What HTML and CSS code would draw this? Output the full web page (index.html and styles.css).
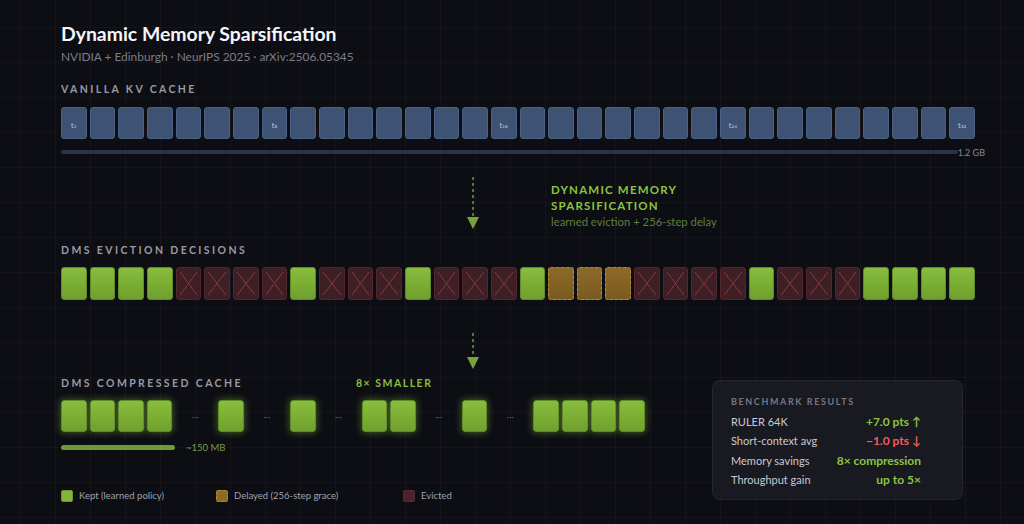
FILE: index.html
```html
<!DOCTYPE html>
<html>
<head>
<meta charset="utf-8">
<title>Dynamic Memory Sparsification</title>
<link rel="stylesheet" href="styles.css">
</head>
<body>
<div class="page">
  <h1 class="title">Dynamic Memory Sparsification</h1>
  <div class="subtitle">NVIDIA + Edinburgh · NeurIPS 2025 · arXiv:2506.05345</div>

  <div class="label l1">VANILLA KV CACHE</div>
  <div class="row r1">
    <div class="cell v"><span class="tl">t₁</span></div>
    <div class="cell v"></div><div class="cell v"></div><div class="cell v"></div>
    <div class="cell v"></div><div class="cell v"></div><div class="cell v"></div>
    <div class="cell v"><span class="tl">t₈</span></div>
    <div class="cell v"></div><div class="cell v"></div><div class="cell v"></div>
    <div class="cell v"></div><div class="cell v"></div><div class="cell v"></div>
    <div class="cell v"></div>
    <div class="cell v"><span class="tl">t₁₆</span></div>
    <div class="cell v"></div><div class="cell v"></div><div class="cell v"></div>
    <div class="cell v"></div><div class="cell v"></div><div class="cell v"></div>
    <div class="cell v"></div>
    <div class="cell v"><span class="tl">t₂₄</span></div>
    <div class="cell v"></div><div class="cell v"></div><div class="cell v"></div>
    <div class="cell v"></div><div class="cell v"></div><div class="cell v"></div>
    <div class="cell v"></div>
    <div class="cell v"><span class="tl">t₃₂</span></div>
  </div>
  <div class="barrow">
    <div class="bar bar-v"></div>
    <span class="size">1.2 GB</span>
  </div>

  <div class="flow">
    <svg class="arrow" width="14" height="53" viewBox="0 0 14 53">
      <line x1="7" y1="0" x2="7" y2="39" stroke="#6f9a36" stroke-width="1.5" stroke-dasharray="3 3"/>
      <polygon points="1,40 13,40 7,52" fill="#76a33a"/>
    </svg>
    <div class="flow-text">
      <div class="flow-title">DYNAMIC MEMORY<br>SPARSIFICATION</div>
      <div class="flow-sub">learned eviction + 256-step delay</div>
    </div>
  </div>

  <div class="label l2">DMS EVICTION DECISIONS</div>
  <div class="row r2">
    <div class="cell k"></div><div class="cell k"></div><div class="cell k"></div><div class="cell k"></div>
    <div class="cell e"></div><div class="cell e"></div><div class="cell e"></div><div class="cell e"></div>
    <div class="cell k"></div>
    <div class="cell e"></div><div class="cell e"></div><div class="cell e"></div>
    <div class="cell k"></div>
    <div class="cell e"></div><div class="cell e"></div><div class="cell e"></div>
    <div class="cell k"></div>
    <div class="cell d"></div><div class="cell d"></div><div class="cell d"></div>
    <div class="cell e"></div><div class="cell e"></div><div class="cell e"></div><div class="cell e"></div>
    <div class="cell k"></div>
    <div class="cell e"></div><div class="cell e"></div><div class="cell e"></div>
    <div class="cell k"></div><div class="cell k"></div><div class="cell k"></div><div class="cell k"></div>
  </div>

  <div class="flow flow2">
    <svg class="arrow" width="14" height="36" viewBox="0 0 14 36">
      <line x1="7" y1="0" x2="7" y2="23" stroke="#6f9a36" stroke-width="1.5" stroke-dasharray="3 3"/>
      <polygon points="1,24 13,24 7,36" fill="#76a33a"/>
    </svg>
  </div>

  <div class="bottom">
    <div class="left">
      <div class="label l3"><span class="lbl-fixed">DMS COMPRESSED CACHE</span><span class="smaller">8× SMALLER</span></div>
      <div class="crow">
        <div class="grp"><div class="ccell"></div><div class="ccell"></div><div class="ccell"></div><div class="ccell"></div></div>
        <div class="dots">···</div>
        <div class="grp"><div class="ccell"></div></div>
        <div class="dots">···</div>
        <div class="grp"><div class="ccell"></div></div>
        <div class="dots">···</div>
        <div class="grp"><div class="ccell"></div><div class="ccell"></div></div>
        <div class="dots">···</div>
        <div class="grp"><div class="ccell"></div></div>
        <div class="dots">···</div>
        <div class="grp"><div class="ccell"></div><div class="ccell"></div><div class="ccell"></div><div class="ccell"></div></div>
      </div>
      <div class="cbar-row">
        <div class="bar bar-c"></div>
        <span class="csize">~150 MB</span>
      </div>
      <div class="legend">
        <div class="li li1"><span class="sw sw-k"></span>Kept (learned policy)</div>
        <div class="li li2"><span class="sw sw-d"></span>Delayed (256-step grace)</div>
        <div class="li"><span class="sw sw-e"></span>Evicted</div>
      </div>
    </div>

    <div class="panel">
      <div class="panel-title">BENCHMARK RESULTS</div>
      <div class="stats">
        <span class="sl">RULER 64K</span><span class="sv good">+7.0 pts ↑</span>
        <span class="sl">Short-context avg</span><span class="sv bad">−1.0 pts ↓</span>
        <span class="sl">Memory savings</span><span class="sv good">8× compression</span>
        <span class="sl">Throughput gain</span><span class="sv good">up to 5×</span>
      </div>
    </div>
  </div>
</div>
</body>
</html>
```

FILE: styles.css
```css
html, body {
  margin: 0;
  padding: 0;
}
body {
  width: 1024px;
  height: 524px;
  overflow: hidden;
  background-color: #0d0d14;
  background-image:
    linear-gradient(to right, rgba(255,255,255,0.028) 1px, transparent 1px),
    linear-gradient(to bottom, rgba(255,255,255,0.028) 1px, transparent 1px);
  background-size: 35px 35px;
  background-position: 20px 27px;
  font-family: Lato, "Noto Sans", sans-serif;
  color: #d0d0d8;
}
.page {
  padding: 22px 49px 0 61px;
}
.title {
  margin: 0;
  font-size: 19.4px;
  line-height: 24px;
  font-weight: 700;
  color: #f6f6fa;
}
.subtitle {
  margin-top: 3px;
  font-size: 11.9px;
  line-height: 16px;
  color: #7d7d87;
}
.label {
  font-size: 10.5px;
  line-height: 14px;
  font-weight: 700;
  letter-spacing: 2.4px;
  color: #9a9aa4;
}
.l1 { margin-top: 17px; }
.l2 { margin-top: 13px; }
.row {
  display: flex;
  gap: 3px;
}
.r1 { margin-top: 11px; height: 32px; }
.r2 { margin-top: 10px; height: 33px; }
.cell {
  flex: 1;
  box-sizing: border-box;
  border-radius: 3px;
  position: relative;
}
.v {
  background: #3e5374;
  border: 1px solid #4a6084;
  display: flex;
  align-items: center;
  justify-content: center;
  padding-top: 5px;
}
.tl {
  font-family: "DejaVu Sans", sans-serif;
  font-size: 7px;
  color: #c3cbd9;
}
.k {
  background: linear-gradient(#87bd3d, #6f9f2d);
  border: 1px solid #5f8c27;
}
.e {
  background: #3e1f25;
  border: 1px solid #53262d;
}
.e::before {
  content: "";
  position: absolute;
  inset: 4px 3px;
  background:
    linear-gradient(to top right, transparent calc(50% - 0.7px), #8f3b41 50%, transparent calc(50% + 0.7px)),
    linear-gradient(to bottom right, transparent calc(50% - 0.7px), #8f3b41 50%, transparent calc(50% + 0.7px));
}
.d {
  background: linear-gradient(#8d6a27, #7a5a21);
  border: 1px dashed #b38c3c;
}
.barrow {
  margin-top: 8px;
  height: 10px;
  display: flex;
  align-items: center;
  margin-right: -10px;
}
.bar {
  border-radius: 3px;
}
.bar-v {
  flex: 1;
  height: 4px;
  background: #29334a;
}
.size {
  font-size: 9px;
  color: #858b96;
  line-height: 10px;
  margin-top: 2px;
}
.flow {
  margin-top: 20px;
  display: flex;
  align-items: flex-start;
  padding-left: 405px;
}
.arrow {
  display: block;
  flex: none;
}
.flow-text {
  margin-left: 71px;
  margin-top: 5px;
}
.flow-title {
  font-size: 11.5px;
  line-height: 16px;
  font-weight: 700;
  letter-spacing: 1.2px;
  color: #8cc43f;
}
.flow-sub {
  font-size: 11.3px;
  line-height: 16px;
  color: #5f7f3b;
}
.flow2 {
  margin-top: 33px;
}
.bottom {
  margin-top: 7px;
  display: flex;
  align-items: flex-start;
}
.left {
  flex: none;
}
.lbl-fixed {
  display: inline-block;
  width: 295px;
}
.smaller {
  color: #88be3e;
  letter-spacing: 1.5px;
}
.crow {
  margin-top: 10px;
  display: flex;
  align-items: center;
  height: 32px;
}
.grp {
  display: flex;
  gap: 3px;
}
.ccell {
  width: 25.6px;
  height: 32px;
  box-sizing: border-box;
  border-radius: 3px;
  background: linear-gradient(#88be3d, #70a02e);
  border: 1px solid #5f8c27;
  box-shadow: 0 0 7px 1px rgba(128, 190, 55, 0.42);
}
.dots {
  width: 22px;
  margin: 0 12px;
  text-align: center;
  font-size: 9px;
  color: #5b5b66;
}
.cbar-row {
  margin-top: 11px;
  display: flex;
  align-items: center;
  height: 9px;
}
.bar-c {
  width: 114px;
  height: 5px;
  background: #6c9b31;
}
.csize {
  margin-left: 11px;
  font-size: 9.5px;
  color: #789a47;
}
.legend {
  margin-top: 37px;
  display: flex;
  align-items: center;
  font-size: 9.5px;
  line-height: 14px;
  color: #a2a2ab;
}
.li {
  display: flex;
  align-items: center;
}
.li1 { width: 155px; }
.li2 { width: 187px; }
.sw {
  width: 12px;
  height: 12px;
  box-sizing: border-box;
  border-radius: 2px;
  margin-right: 6px;
  flex: none;
}
.sw-k { background: #80b538; border: 1px solid #6a9a2c; }
.sw-d { background: #8d6a27; border: 1px dashed #b38c3c; }
.sw-e { background: #4a2228; border: 1px solid #5c2a31; }
.panel {
  margin-left: auto;
  margin-right: 12px;
  margin-top: 4px;
  width: 251px;
  height: 120px;
  box-sizing: border-box;
  padding: 15px 18px 0 18px;
  background: rgba(30, 30, 38, 0.75);
  border: 1px solid #26262f;
  border-radius: 8px;
}
.panel-title {
  font-size: 9px;
  line-height: 12px;
  font-weight: 700;
  letter-spacing: 1.6px;
  color: #777781;
}
.stats {
  margin-top: 4px;
  width: 190px;
  display: grid;
  grid-template-columns: auto auto;
  justify-content: space-between;
  line-height: 19.3px;
}
.sl {
  font-size: 11px;
  color: #c9c9d1;
}
.sv {
  font-size: 12px;
  font-weight: 700;
  text-align: right;
}
.good { color: #8cc43f; }
.bad { color: #ef5d5d; }
```
